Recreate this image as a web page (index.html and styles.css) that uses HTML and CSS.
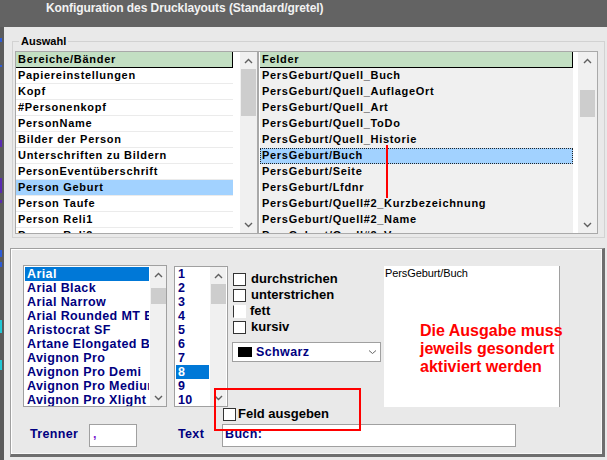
FILE: index.html
```html
<!DOCTYPE html>
<html lang="de">
<head>
<meta charset="utf-8">
<title>Konfiguration des Drucklayouts</title>
<link rel="stylesheet" href="styles.css">
</head>
<body>
<div class="titlebar">Konfiguration des Drucklayouts (Standard/gretel)</div>
<div class="main">
  <div class="strip"></div>
  <div class="window">
    <fieldset class="group">
      <legend>Auswahl</legend>
      <div class="lists">
        <div class="listbox left">
          <div class="rows">
            <div class="hdr">Bereiche/Bänder</div>
            <div class="row">Papiereinstellungen</div>
            <div class="row">Kopf</div>
            <div class="row">#Personenkopf</div>
            <div class="row">PersonName</div>
            <div class="row">Bilder der Person</div>
            <div class="row">Unterschriften zu Bildern</div>
            <div class="row">PersonEventüberschrift</div>
            <div class="row sel">Person Geburt</div>
            <div class="row">Person Taufe</div>
            <div class="row">Person Reli1</div>
            <div class="row">Person Reli2</div>
          </div>
          <div class="sb">
            <div class="arr"><svg width="9" height="6" viewBox="0 0 9 6"><path d="M1 5 L4.5 1.5 L8 5" fill="none" stroke="#5f5f5f" stroke-width="1.4"/></svg></div>
            <div class="thumb t-left"></div>
            <div class="fill"></div>
            <div class="arr"><svg width="9" height="6" viewBox="0 0 9 6"><path d="M1 1 L4.5 4.5 L8 1" fill="none" stroke="#5f5f5f" stroke-width="1.4"/></svg></div>
          </div>
        </div>
        <div class="listbox right">
          <div class="rows">
            <div class="hdr">Felder</div>
            <div class="row">PersGeburt/Quell_Buch</div>
            <div class="row">PersGeburt/Quell_AuflageOrt</div>
            <div class="row">PersGeburt/Quell_Art</div>
            <div class="row">PersGeburt/Quell_ToDo</div>
            <div class="row">PersGeburt/Quell_Historie</div>
            <div class="row sel focus">PersGeburt/Buch</div>
            <div class="row">PersGeburt/Seite</div>
            <div class="row">PersGeburt/Lfdnr</div>
            <div class="row">PersGeburt/Quell#2_Kurzbezeichnung</div>
            <div class="row">PersGeburt/Quell#2_Name</div>
            <div class="row">PersGeburt/Quell#2_Vorname</div>
          </div>
          <div class="sb wide">
            <div class="arr"><svg width="9" height="6" viewBox="0 0 9 6"><path d="M1 5 L4.5 1.5 L8 5" fill="none" stroke="#5f5f5f" stroke-width="1.4"/></svg></div>
            <div class="thumb t-right"></div>
            <div class="fill"></div>
            <div class="arr"><svg width="9" height="6" viewBox="0 0 9 6"><path d="M1 1 L4.5 4.5 L8 1" fill="none" stroke="#5f5f5f" stroke-width="1.4"/></svg></div>
          </div>
          <div class="redline"></div>
        </div>
      </div>
    </fieldset>

    <div class="panel">
      <div class="top">
        <div class="fontlist">
          <div class="frows">
            <div class="frow sel">Arial</div>
            <div class="frow">Arial Black</div>
            <div class="frow">Arial Narrow</div>
            <div class="frow">Arial Rounded MT Bold</div>
            <div class="frow">Aristocrat SF</div>
            <div class="frow">Artane Elongated Bold</div>
            <div class="frow">Avignon Pro</div>
            <div class="frow">Avignon Pro Demi</div>
            <div class="frow">Avignon Pro Medium</div>
            <div class="frow">Avignon Pro Xlight</div>
          </div>
          <div class="sb small">
            <div class="arr"><svg width="9" height="6" viewBox="0 0 9 6"><path d="M1 5 L4.5 1.5 L8 5" fill="none" stroke="#5f5f5f" stroke-width="1.4"/></svg></div>
            <div class="thumb t-font"></div>
            <div class="fill"></div>
            <div class="arr"><svg width="9" height="6" viewBox="0 0 9 6"><path d="M1 1 L4.5 4.5 L8 1" fill="none" stroke="#5f5f5f" stroke-width="1.4"/></svg></div>
          </div>
        </div>
        <div class="sizelist">
          <div class="srows">
            <div class="frow">1</div>
            <div class="frow">2</div>
            <div class="frow">3</div>
            <div class="frow">4</div>
            <div class="frow">5</div>
            <div class="frow">6</div>
            <div class="frow">7</div>
            <div class="frow sel">8</div>
            <div class="frow">9</div>
            <div class="frow">10</div>
          </div>
          <div class="sb small">
            <div class="arr"><svg width="9" height="6" viewBox="0 0 9 6"><path d="M1 5 L4.5 1.5 L8 5" fill="none" stroke="#5f5f5f" stroke-width="1.4"/></svg></div>
            <div class="thumb t-size"></div>
            <div class="fill"></div>
            <div class="arr"><svg width="9" height="6" viewBox="0 0 9 6"><path d="M1 1 L4.5 4.5 L8 1" fill="none" stroke="#5f5f5f" stroke-width="1.4"/></svg></div>
          </div>
        </div>
        <div class="options">
          <div class="chk"><span class="box"></span>durchstrichen</div>
          <div class="chk"><span class="box"></span>unterstrichen</div>
          <div class="chk"><span class="box partial"></span>fett</div>
          <div class="chk"><span class="box"></span>kursiv</div>
          <div class="combo">
            <span class="swatch"></span>
            <span class="combo-text">Schwarz</span>
            <svg width="9" height="6" viewBox="0 0 9 6"><path d="M1 1.5 L4.5 4.5 L8 1.5" fill="none" stroke="#666" stroke-width="1"/></svg>
          </div>
        </div>
        <div class="preview">
          <div class="pv-title">PersGeburt/Buch</div>
          <div class="pv-note">Die Ausgabe muss<br>jeweils gesondert<br>aktiviert werden</div>
        </div>
      </div>
      <div class="feldrow">
        <span class="box"></span>Feld ausgeben
        <div class="redbox"></div>
      </div>
      <div class="bottomrow">
        <div class="lbl lbl-trenner">Trenner</div>
        <div class="field f-trenner"><span class="comma">,</span></div>
        <div class="lbl lbl-text">Text</div>
        <div class="field f-text">Buch:</div>
      </div>
    </div>
  </div>
</div>
</body>
</html>
```
FILE: styles.css
```css
* { box-sizing: border-box; }
html, body { margin: 0; padding: 0; }
body {
  width: 607px;
  height: 460px;
  overflow: hidden;
  background: #e9e9e9;
  font-family: "Liberation Sans", Arial, sans-serif;
  color: #000;
}

.titlebar {
  height: 27px;
  background: #636363;
  color: #f2f2f2;
  font-weight: bold;
  font-size: 12px;
  line-height: 15px;
  letter-spacing: -0.08px;
  padding: 1px 0 0 46px;
  white-space: nowrap;
}

.main { display: flex; height: 433px; }

.strip {
  width: 4px;
  flex: none;
  background:
    linear-gradient(#2e5bd6, #2e5bd6) 0 11px / 2px 4px no-repeat,
    linear-gradient(#2e5bd6, #2e5bd6) 0 38px / 2px 2px no-repeat,
    linear-gradient(#5a2bb0, #5a2bb0) 0 113px / 2px 7px no-repeat,
    linear-gradient(#5a2bb0, #5a2bb0) 0 151px / 2px 15px no-repeat,
    linear-gradient(#5a2bb0, #5a2bb0) 0 173px / 2px 3px no-repeat,
    linear-gradient(#2e5bd6, #2e5bd6) 0 223px / 2px 7px no-repeat,
    linear-gradient(#2e5bd6, #2e5bd6) 0 235px / 2px 5px no-repeat,
    linear-gradient(#22c7d6, #22c7d6) 0 293px / 2px 13px no-repeat,
    linear-gradient(#22c7d6, #22c7d6) 0 333px / 2px 10px no-repeat,
    #5b5b5b;
}

.window { flex: 1; display: flex; flex-direction: column; min-width: 0; }

/* ---------- Auswahl group ---------- */
.group {
  margin: 7px 0 0 8px;
  width: 593px;
  min-width: 0;
  padding: 3px 6px 3px 2px;
  border: 1px solid #d2d2d2;
}
.group legend {
  font-size: 11px;
  font-weight: bold;
  line-height: 14px;
  padding: 0 2px;
  margin-left: 4px;
}

.lists { display: flex; height: 183px; }

.listbox {
  display: flex;
  border: 1px solid #a9a9a9;
  background: #fff;
  position: relative;
  overflow: hidden;
}
.listbox.left { width: 243px; }
.listbox.right { width: 340px; padding-left: 1px; }

.rows {
  display: flex;
  flex-direction: column;
  overflow: hidden;
  font-size: 11px;
  font-weight: bold;
  letter-spacing: 0.7px;
}
.left .rows { width: 217px; margin-right: 7px; }
.right .rows { width: 313px; margin-right: 5px; background: #f0f0f0; }

.hdr {
  height: 16px;
  flex: none;
  background: #c3dfc3;
  border-right: 1px solid #000;
  border-bottom: 1px solid #000;
  padding-left: 2px;
  line-height: 15px;
  white-space: nowrap;
}
.row {
  height: 16px;
  flex: none;
  padding-left: 2px;
  line-height: 15px;
  white-space: nowrap;
}
.left .row { border-bottom: 1px solid #ebebeb; }
.row.sel { background: #a2d2ff; }
.row.focus { outline: 1px dotted #222; outline-offset: -1px; }

/* scrollbars */
.sb {
  width: 17px;
  flex: none;
  background: #f0f0f0;
  display: flex;
  flex-direction: column;
  align-items: center;
}
.sb.wide { width: 19px; }
.sb.small { width: 16px; }
.sb .arr {
  height: 17px;
  width: 100%;
  flex: none;
  display: flex;
  align-items: center;
  justify-content: center;
}
.sb .thumb { width: 15px; background: #cdcdcd; flex: none; }
.sb .fill { flex: 1; }
.t-left { height: 47px; }
.t-right { height: 27px; margin-top: 21px; }
.t-font { height: 16px; margin-top: 5px; }
.t-size { height: 20px; }

.redline {
  position: absolute;
  left: 127px;
  top: 93px;
  width: 2px;
  height: 53px;
  background: #ff0000;
}

/* ---------- bottom panel ---------- */
.panel {
  margin: 10px 0 0 6px;
  width: 595px;
  height: 209px;
  border-style: solid;
  border-width: 1px 3px 3px 1px;
  border-color: #a0a0a0 #6e6e6e #6e6e6e #a0a0a0;
  box-shadow: inset 1px 1px 0 #ffffff, inset -1px -1px 0 #f7f7f7;
  padding: 16px 0 0 12px;
}

.top { display: flex; align-items: flex-start; height: 142px; }

.fontlist, .sizelist {
  display: flex;
  border: 1px solid #a0a0a0;
  background: #fff;
  padding-left: 1px;
}
.fontlist { width: 144px; height: 142px; }
.sizelist { width: 54px; height: 141px; margin: 1px 0 0 7px; }

.frows, .srows {
  display: flex;
  flex-direction: column;
  overflow: hidden;
  padding-top: 1px;
  margin-right: 1px;
  color: #000080;
  font-size: 12.5px;
  font-weight: bold;
  letter-spacing: 0.4px;
}
.frows { width: 124px; }
.srows { width: 33px; padding-top: 0; }
.frow {
  height: 14px;
  flex: none;
  line-height: 14px;
  padding-left: 2px;
  white-space: nowrap;
}
.frow.sel { background: #0078d7; color: #fff; }

.options {
  width: 149px;
  margin-left: 4px;
  padding-top: 6px;
  display: flex;
  flex-direction: column;
}
.chk {
  display: flex;
  height: 16px;
  font-size: 13px;
  font-weight: bold;
  line-height: 16px;
  white-space: nowrap;
}
.box {
  width: 13px;
  height: 13px;
  flex: none;
  border: 1px solid #333;
  background: #fff;
  margin: 2px 5px 0 1px;
}
.box.partial { border-color: transparent transparent transparent #333; margin-right: 4px; }

.combo {
  margin-top: 7px;
  height: 20px;
  border: 1px solid #a0a0a0;
  background: #fff;
  display: flex;
  align-items: center;
  padding: 0 3px 0 5px;
}
.swatch { width: 14px; height: 10px; background: #000; flex: none; }
.combo-text {
  flex: 1;
  margin-left: 4px;
  color: #000080;
  font-size: 12.5px;
  font-weight: bold;
  letter-spacing: 0.4px;
}

.preview {
  width: 176px;
  height: 141px;
  margin: 1px 0 0 3px;
  background: #fff;
  border-right: 1px solid #a0a0a0;
  padding: 1px 0 0 1px;
}
.pv-title { font-size: 11px; line-height: 12px; letter-spacing: -0.1px; }
.pv-note {
  margin: 43px 0 0 35px;
  color: #ff0000;
  font-size: 16px;
  font-weight: bold;
  line-height: 18px;
  white-space: nowrap;
}

.feldrow {
  position: relative;
  display: flex;
  height: 16px;
  margin: -1px 0 0 200px;
  width: 140px;
  font-size: 13px;
  font-weight: bold;
  line-height: 16px;
  white-space: nowrap;
}
.feldrow .box { margin: 2px 2px 0 0; }
.redbox {
  position: absolute;
  left: -9px;
  top: -18px;
  width: 147px;
  height: 43px;
  border: 2px solid #ff0000;
}

.bottomrow {
  display: flex;
  align-items: flex-start;
  height: 23px;
  margin-top: 2px;
  color: #000080;
  font-size: 12.5px;
  font-weight: bold;
  letter-spacing: 0.35px;
}
.lbl { line-height: 14px; padding-top: 3px; white-space: nowrap; }
.lbl-trenner { width: 59px; margin-left: 7px; }
.lbl-text { width: 44px; margin-left: 41px; }
.field {
  height: 23px;
  border: 1px solid #a0a0a0;
  background: #fff;
  line-height: 14px;
  padding: 2px 0 0 2px;
}
.f-trenner { width: 48px; padding-left: 3px; }
.f-text { width: 294px; }
.comma { color: #7a1ccf; }
```
